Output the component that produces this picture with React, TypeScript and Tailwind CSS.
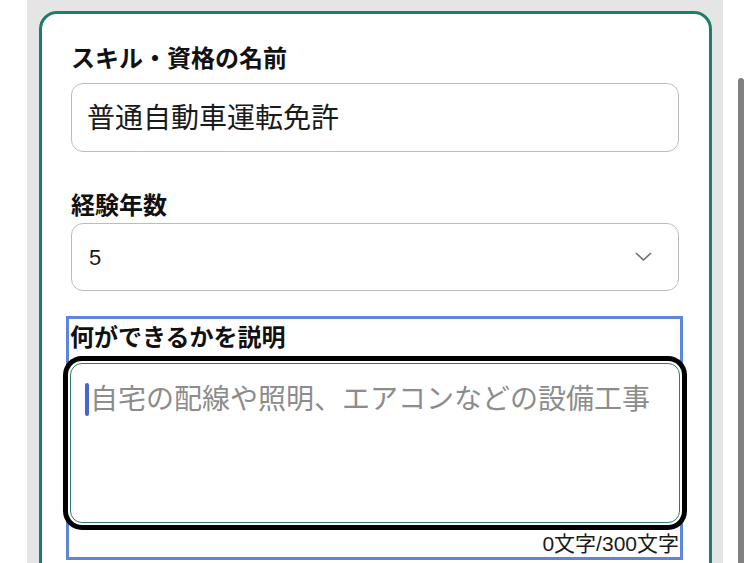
import React from "react";

const FONT = { fontFamily: '"Liberation Sans", "Noto Sans CJK JP", sans-serif' };

export default function App() {
  return (
    <div
      className="relative w-[750px] h-[563px] overflow-hidden bg-white"
      style={FONT}
    >
      <div className="ml-[27px] w-[696px] h-full bg-[#e5e5e5] pt-[11px] pl-[12px]">
        <div className="w-[673px] h-[600px] border-[3px] border-[#1f7b6b] rounded-[18px] bg-white px-[29px] pt-[29px]">
          {/* Field 1 */}
          <div className="text-[24px] leading-[32px] font-bold text-[#111]">
            スキル・資格の名前
          </div>
          <div className="mt-[8px] h-[69px] w-[608px] rounded-[12px] border-[1.5px] border-[#bcbcbc] flex items-center pl-[15px] pt-[3px] text-[28px] text-[#1a1a1a]">
            普通自動車運転免許
          </div>

          {/* Field 2 */}
          <div className="mt-[38px] text-[24px] leading-[32px] font-bold text-[#111]">
            経験年数
          </div>
          <div className="mt-[1px] h-[68px] w-[608px] rounded-[12px] border-[1.5px] border-[#bcbcbc] flex items-center justify-between pl-[17px] pr-[26px] text-[22px] text-[#1a1a1a]">
            <span>5</span>
            <svg width="17" height="10" viewBox="0 0 17 10" fill="none">
              <path
                d="M1.5 1.5 L8.5 8 L15.5 1.5"
                stroke="#6b6b6b"
                strokeWidth="1.6"
                strokeLinecap="round"
                strokeLinejoin="round"
              />
            </svg>
          </div>

          {/* Field 3 */}
          <div className="mt-[25px] -ml-[5px] w-[617px] border-[3px] border-[#5b86d9] pl-[1px]">
            <div className="text-[24px] leading-[30px] font-bold text-[#111] pt-[4px]">
              何ができるかを説明
            </div>
            <div className="mt-[10px] h-[160px] w-[610px] rounded-[12px] border-[1.5px] border-[#2f7b6c] bg-white shadow-[0_0_0_2px_#ffffff,0_0_0_7px_#000000] pl-[14px] pt-[19px]">
              <div className="flex items-center text-[28px] leading-[33px] text-[#8c8c8c]">
                <span className="inline-block w-[4px] h-[33px] rounded-full bg-[#4466d0] mr-[1px]" />
                <span>自宅の配線や照明、エアコンなどの設備工事</span>
              </div>
            </div>
            <div className="mt-[7px] text-right text-[21px] leading-[27px] text-[#1a1a1a] pr-[1px]">
              0文字/300文字
            </div>
          </div>
        </div>
      </div>
      <div className="absolute left-[738px] top-[78px] w-[6px] h-[500px] rounded-t-full bg-[#808080]" />
    </div>
  );
}
